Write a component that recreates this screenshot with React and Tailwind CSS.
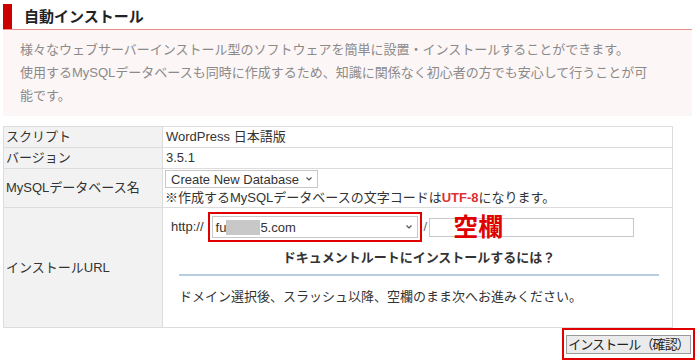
import React from 'react';

const font = { fontFamily: '"Liberation Sans", "Noto Sans CJK JP", sans-serif' };

const Chevron = () => (
  <svg width="8" height="6" viewBox="0 0 8 6" className="shrink-0">
    <path d="M1.5 1.5 L4 4 L6.5 1.5" fill="none" stroke="#555" strokeWidth="1.2" />
  </svg>
);

export default function App() {
  return (
    <div className="w-[700px] h-[360px] bg-white text-[#333] overflow-hidden" style={font}>
      {/* Title */}
      <div className="pl-[3px] pr-[8px] pt-[4px]">
        <div className="flex items-stretch h-[26px] border-b border-[#f08c8c]">
          <div className="w-[9px] bg-[#cc0000]" />
          <h1 className="pl-[12px] text-[15px] font-bold text-[#222] leading-[26px]">自動インストール</h1>
        </div>
        <div className="bg-[#fdf6f6] h-[86px] pl-[17px] pt-[8px] text-[13px] leading-[23px] text-[#8a8a8a]">
          <div className="w-[630px]">
            <p>様々なウェブサーバーインストール型のソフトウェアを簡単に設置・インストールすることができます。</p>
            <p>使用するMySQLデータベースも同時に作成するため、知識に関係なく初心者の方でも安心して行うことが可能です。</p>
          </div>
        </div>
      </div>

      {/* Form table */}
      <div className="pl-[3px] pt-[10px]">
        <table className="w-[670px] border-collapse text-[13px] text-[#333]">
          <tbody>
            <tr className="h-[21px]">
              <td className="w-[159px] bg-[#f2f2f2] border border-[#dcdcdc] px-[2px]">スクリプト</td>
              <td className="border border-[#dcdcdc] px-[3px]">WordPress 日本語版</td>
            </tr>
            <tr className="h-[20px]">
              <td className="bg-[#f2f2f2] border border-[#dcdcdc] px-[2px]">バージョン</td>
              <td className="border border-[#dcdcdc] px-[3px]">3.5.1</td>
            </tr>
            <tr className="h-[39px]">
              <td className="bg-[#f2f2f2] border border-[#dcdcdc] px-[2px]">MySQLデータベース名</td>
              <td className="border border-[#dcdcdc] px-[2px] pt-[1px]">
                <div className="inline-flex items-center gap-[6px] h-[18px] border border-[#c8c8c8] pl-[5px] pr-[4px] leading-none whitespace-nowrap">
                  <span>Create New Database</span>
                  <Chevron />
                </div>
                <div className="leading-[18px] whitespace-nowrap">
                  ※作成するMySQLデータベースの文字コードは<span className="font-bold text-[#e03030]">UTF-8</span>になります。
                </div>
              </td>
            </tr>
            <tr className="h-[120px]">
              <td className="bg-[#f2f2f2] border border-[#dcdcdc] px-[2px]">インストールURL</td>
              <td className="border border-[#dcdcdc] align-top pl-[8px] pt-[4px]">
                <div className="flex items-center">
                  <span className="mr-[4px]">http://</span>
                  <div className="border-2 border-[#e00000] p-[2px] w-[214px] h-[30px]">
                    <div className="flex items-center h-full border border-[#c8c8c8] pl-[3px] pr-[4px] leading-none">
                      <span>fu</span>
                      <span className="w-[34px] h-[15px] bg-[#c8c8c8]" />
                      <span>5.com</span>
                      <span className="flex-1" />
                      <Chevron />
                    </div>
                  </div>
                  <span className="mx-[2px] text-[#666]">/</span>
                  <div className="relative w-[205px] h-[19px] border border-[#c8c8c8]">
                    <span className="absolute left-[23px] top-[-4px] text-[25px] font-bold text-[#e00000] leading-none">空欄</span>
                  </div>
                </div>
                <div className="w-[480px] ml-[8px] mt-[6px]">
                  <div className="text-center font-bold text-[13px] leading-[20px] pb-[6px] border-b-2 border-[#b8cde0]">
                    ドキュメントルートにインストールするには？
                  </div>
                  <p className="pt-[12px] leading-[18px]">ドメイン選択後、スラッシュ以降、空欄のまま次へお進みください。</p>
                </div>
              </td>
            </tr>
          </tbody>
        </table>
        <div className="flex justify-end pr-[5px]">
          <div className="border-2 border-[#e00000] p-[2px]">
            <button className="h-[19px] w-[125px] bg-[#ebebeb] border border-[#9a9a9a] text-[13px] tracking-[-0.9px] text-[#222] leading-none whitespace-nowrap">
              インストール（確認）
            </button>
          </div>
        </div>
      </div>
    </div>
  );
}
